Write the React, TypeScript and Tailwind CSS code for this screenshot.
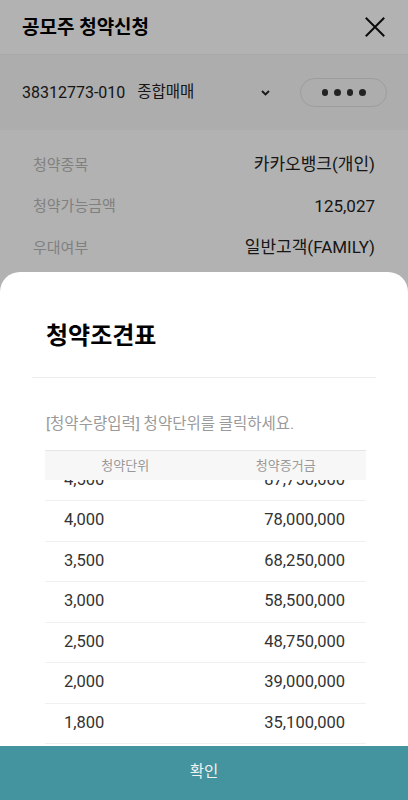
import React, { useLayoutEffect, useRef } from "react";

const rows: [string, string][] = [
  ["5,000", "97,500,000"],
  ["4,500", "87,750,000"],
  ["4,000", "78,000,000"],
  ["3,500", "68,250,000"],
  ["3,000", "58,500,000"],
  ["2,500", "48,750,000"],
  ["2,000", "39,000,000"],
  ["1,800", "35,100,000"],
  ["1,500", "29,250,000"],
  ["1,000", "19,500,000"],
];

const info: [string, string][] = [
  ["청약종목", "카카오뱅크(개인)"],
  ["청약가능금액", "125,027"],
  ["우대여부", "일반고객(FAMILY)"],
];

export default function App() {
  const scrollRef = useRef<HTMLDivElement>(null);
  useLayoutEffect(() => {
    if (scrollRef.current) scrollRef.current.scrollTop = 60;
  }, []);

  return (
    <div className="relative w-[408px] h-[800px] overflow-hidden bg-white font-['Roboto','Noto_Sans_CJK_KR',sans-serif]">
      {/* underlying page */}
      <div className="flex flex-col">
        <div className="h-[55px] flex items-center justify-between pl-[22px] pr-[23px] border-b border-[#f2f2f2]">
          <span className="text-[19px] font-bold text-black leading-none">공모주 청약신청</span>
          <svg width="20" height="20" viewBox="0 0 20 20" fill="none">
            <path d="M1.5 1.5L18.5 18.5M18.5 1.5L1.5 18.5" stroke="#111" strokeWidth="2" strokeLinecap="square" />
          </svg>
        </div>
        <div className="h-[75px] bg-[#f8f8f8] flex items-center pl-[22px] pr-[21px]">
          <span className="text-[16px] text-[#222]">38312773-010</span>
          <span className="ml-[12px] text-[15.5px] text-[#222]">종합매매</span>
          <svg className="ml-[67px]" width="9" height="6" viewBox="0 0 9 6" fill="none">
            <path d="M1 1L4.5 4.5L8 1" stroke="#222" strokeWidth="1.8" />
          </svg>
          <div className="ml-auto w-[87px] h-[29px] rounded-full border border-[#e0e0e0] flex items-center justify-center gap-[6px]">
            <span className="w-[6.5px] h-[6.5px] rounded-full bg-[#333]" />
            <span className="w-[6.5px] h-[6.5px] rounded-full bg-[#333]" />
            <span className="w-[6.5px] h-[6.5px] rounded-full bg-[#333]" />
            <span className="w-[6.5px] h-[6.5px] rounded-full bg-[#333]" />
          </div>
        </div>
        <div className="flex flex-col pt-[14px] px-[33px]">
          {info.map(([k, v]) => (
            <div key={k} className="h-[41.5px] flex items-center justify-between">
              <span className="text-[15px] text-[#b8b8b8]">{k}</span>
              <span className="text-[17px] text-[#222]">{v}</span>
            </div>
          ))}
          <div className="ml-[117px] mt-[17px] h-[40px] border border-[#e6e6e6] rounded-[4px]" />
        </div>
      </div>

      {/* dim overlay */}
      <div className="absolute inset-0 bg-black/30" />

      {/* bottom sheet */}
      <div className="absolute left-0 right-0 bottom-0 h-[528px] bg-white rounded-t-[20px] flex flex-col">
        <div className="pt-[47px] px-[46px]">
          <h2 className="text-[24px] leading-[34px] font-bold text-black">청약조견표</h2>
        </div>
        <div className="mt-[24px] mx-[32px] h-px bg-[#ececec]" />
        <p className="mt-[36px] px-[46px] text-[15.5px] leading-[20px] text-[#9a9a9a]">
          [청약수량입력] 청약단위를 클릭하세요.
        </p>
        <div
          ref={scrollRef}
          className="mt-[16px] ml-[45px] w-[321px] flex-1 min-h-0 overflow-y-auto [scrollbar-width:none]"
        >
          <div className="sticky top-0 z-10 h-[30px] bg-[#f7f7f7] border-t border-[#e6e6e6] grid grid-cols-2 items-center text-center text-[13px] text-[#999]">
            <span>청약단위</span>
            <span>청약증거금</span>
          </div>
          {rows.map(([a, b]) => (
            <div
              key={a}
              className="h-[40.5px] border-b border-[#f0f0f0] flex items-center justify-between pl-[19px] pr-[21px] text-[16.5px] text-[#333]"
            >
              <span>{a}</span>
              <span>{b}</span>
            </div>
          ))}
        </div>
        <button className="h-[54px] bg-[#43949e] text-[#f2f2f2] text-[15.5px] flex items-center justify-center">
          확인
        </button>
      </div>
    </div>
  );
}
